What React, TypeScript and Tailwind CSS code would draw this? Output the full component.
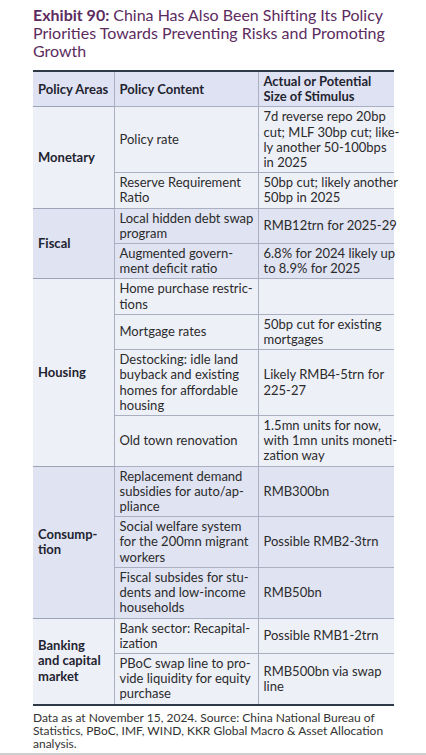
import React from 'react';

type Row = { content: string[]; size: string[] };
type Group = { area: string[]; tone: 'light' | 'dark'; rows: Row[] };

const groups: Group[] = [
  {
    area: ['Monetary'],
    tone: 'light',
    rows: [
      { content: ['Policy rate'], size: ['7d reverse repo 20bp', 'cut; MLF 30bp cut; like-', 'ly another 50-100bps', 'in 2025'] },
      { content: ['Reserve Requirement', 'Ratio'], size: ['50bp cut; likely another', '50bp in 2025'] },
    ],
  },
  {
    area: ['Fiscal'],
    tone: 'dark',
    rows: [
      { content: ['Local hidden debt swap', 'program'], size: ['RMB12trn for 2025-29'] },
      { content: ['Augmented govern-', 'ment deficit ratio'], size: ['6.8% for 2024 likely up', 'to 8.9% for 2025'] },
    ],
  },
  {
    area: ['Housing'],
    tone: 'light',
    rows: [
      { content: ['Home purchase restric-', 'tions'], size: [] },
      { content: ['Mortgage rates'], size: ['50bp cut for existing', 'mortgages'] },
      { content: ['Destocking: idle land', 'buyback and existing', 'homes for affordable', 'housing'], size: ['Likely RMB4-5trn for', '225-27'] },
      { content: ['Old town renovation'], size: ['1.5mn units for now,', 'with 1mn units moneti-', 'zation way'] },
    ],
  },
  {
    area: ['Consump-', 'tion'],
    tone: 'dark',
    rows: [
      { content: ['Replacement demand', 'subsidies for auto/ap-', 'pliance'], size: ['RMB300bn'] },
      { content: ['Social welfare system', 'for the 200mn migrant', 'workers'], size: ['Possible RMB2-3trn'] },
      { content: ['Fiscal subsides for stu-', 'dents and low-income', 'households'], size: ['RMB50bn'] },
    ],
  },
  {
    area: ['Banking', 'and capital', 'market'],
    tone: 'light',
    rows: [
      { content: ['Bank sector: Recapital-', 'ization'], size: ['Possible RMB1-2trn'] },
      { content: ['PBoC swap line to pro-', 'vide liquidity for equity', 'purchase'], size: ['RMB500bn via swap', 'line'] },
    ],
  },
];

const Lines = ({ lines }: { lines: string[] }) => (
  <>
    {lines.map((l, i) => (
      <div key={i} className="whitespace-nowrap">{l}</div>
    ))}
  </>
);

const App: React.FC = () => {
  return (
    <div className="w-[426px] h-[755px] bg-white text-[#2b2b2b] border-b-2 border-[#cfcfcf]" style={{ fontFamily: 'Lato, "Open Sans", sans-serif' }}>
      <div className="px-[33px] pt-[6px]">
        <h1 className="text-[16px] leading-[18px] text-[#5c2b60]">
          <span className="font-bold">Exhibit 90: </span>
          <span>China Has Also Been Shifting Its Policy Priorities Towards Preventing Risks and Promoting Growth</span>
        </h1>

        <table className="mt-[10px] w-[361px] table-fixed border-collapse text-[13px] leading-[15.2px] border-t-2 border-b-2 border-t-[#2e3a48] border-b-[#2e3a48]">
          <colgroup>
            <col className="w-[81px]" />
            <col className="w-[144px]" />
            <col className="w-[136px]" />
          </colgroup>
          <thead>
            <tr className="bg-[#dfe2f2] font-bold text-[#1f2430] h-[34px]">
              <th className="text-left font-bold px-[5px] py-[2px] border-r border-[#aab0c2] whitespace-nowrap">Policy Areas</th>
              <th className="text-left font-bold px-[5px] py-[2px] border-r border-[#aab0c2]">Policy Content</th>
              <th className="text-left font-bold px-[5px] py-[2px]">
                <Lines lines={['Actual or Potential', 'Size of Stimulus']} />
              </th>
            </tr>
          </thead>
          <tbody>
            {groups.map((g, gi) =>
              g.rows.map((r, ri) => {
                const bg = g.tone === 'light' ? 'bg-[#eef0f8]' : 'bg-[#e0e3f2]';
                return (
                  <tr key={`${gi}-${ri}`} className={bg}>
                    {ri === 0 && (
                      <td rowSpan={g.rows.length} className="align-middle px-[5px] py-[2px] font-bold text-[#1f2430] border-t border-t-[#9da3b6] border-r border-r-[#aab0c2]">
                        <Lines lines={g.area} />
                      </td>
                    )}
                    <td className="align-middle px-[5px] py-[2px] border-r border-r-[#aab0c2] border-t border-t-[#aab0c2]">
                      <Lines lines={r.content} />
                    </td>
                    <td className="align-middle px-[5px] py-[2px] border-t border-t-[#aab0c2]">
                      <Lines lines={r.size} />
                    </td>
                  </tr>
                );
              })
            )}
          </tbody>
        </table>

        <p className="mt-[5px] text-[12px] leading-[13px] text-[#333]">
          Data as at November 15, 2024. Source: China National Bureau of Statistics, PBoC, IMF, WIND, KKR Global Macro &amp; Asset Allocation analysis.
        </p>
      </div>
    </div>
  );
};

export default App;
